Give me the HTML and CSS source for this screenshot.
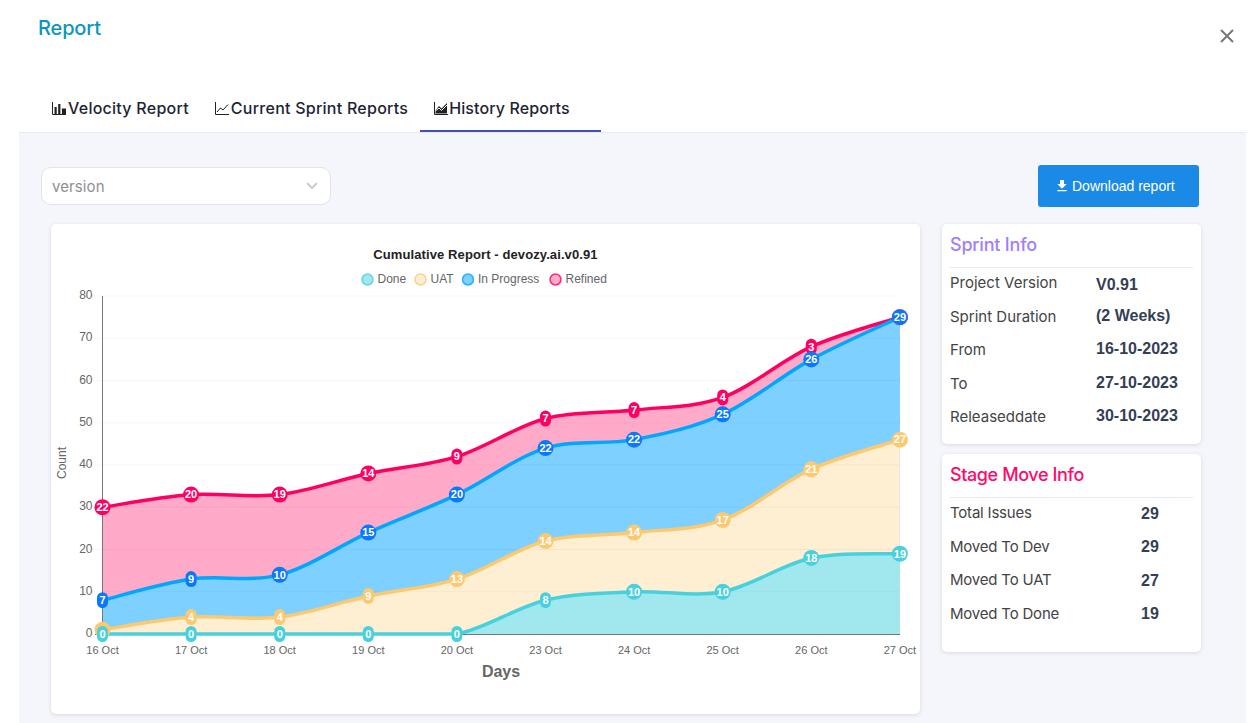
FILE: index.html
```html
<!DOCTYPE html>
<html lang="en">
<head>
    <meta charset="UTF-8">
    <title>Report</title>
    <link rel="stylesheet" href="styles.css">
</head>
<body>
    <div class="head">
        <h1 class="head-title">Report</h1>
        <button class="close" aria-label="Close">
            <svg width="14" height="14" viewBox="0 0 14 14"><path d="M1 1l12 12M13 1L1 13"/></svg>
        </button>
    </div>

    <div class="tabs">
        <a class="tab">
            <svg class="tab-icon" viewBox="0 0 14 14"><path class="ink" d="M.5 1v12.500H14" /><path class="fill" d="M2.500 6h2.200v7H2.500zM6.200 3h2.200v10H6.200zM9.900 7.500H14V13H9.900z"/></svg>
            Velocity Report
        </a>
        <a class="tab">
            <svg class="tab-icon" viewBox="0 0 14 14"><path class="ink" d="M.5 1v12.500H14M2 11l3.500-4 2.500 2 5-5.500"/></svg>
            Current Sprint Reports
        </a>
        <a class="tab tab-active">
            <svg class="tab-icon" viewBox="0 0 14 14"><path class="ink" d="M.5 1v12.500H14"/><path class="fill" d="M1.500 12.500V9.500L5 5l2.500 2.500L13 2v10.500z"/><path class="cut" d="M1.500 10l3.500-3 2.500 2.500L13 4"/></svg>
            History Reports
        </a>
    </div>

    <div class="panel">
        <div class="toolbar">
            <div class="select">
                <span>version</span>
                <svg width="12" height="8" viewBox="0 0 12 8"><path d="M1 1l5 5 5-5"/></svg>
            </div>
            <button class="download">
                <svg width="16" height="16" viewBox="0 0 24 24"><path d="M19 9h-4V3H9v6H5l7 7 7-7zM5 18v2h14v-2H5z"/></svg>
                Download report
            </button>
        </div>

        <div class="content">
            <div class="card chart-card" id="chart"></div>

            <div class="side">
                <div class="card info info-sprint">
                    <h2 class="info-title">Sprint Info</h2>
                    <div class="info-row"><span>Project Version</span><b class="info-low">V0.91</b></div>
                    <div class="info-row"><span>Sprint Duration</span><b>(2 Weeks)</b></div>
                    <div class="info-row"><span>From</span><b>16-10-2023</b></div>
                    <div class="info-row"><span>To</span><b>27-10-2023</b></div>
                    <div class="info-row"><span>Releaseddate</span><b>30-10-2023</b></div>
                </div>
                <div class="card info info-stage">
                    <h2 class="info-title">Stage Move Info</h2>
                    <div class="info-row"><span>Total Issues</span><b>29</b></div>
                    <div class="info-row"><span>Moved To Dev</span><b>29</b></div>
                    <div class="info-row"><span>Moved To UAT</span><b>27</b></div>
                    <div class="info-row"><span>Moved To Done</span><b>19</b></div>
                </div>
            </div>
        </div>
    </div>

    <script src="chart.js"></script>
</body>
</html>
```

FILE: styles.css
```css
* {
    box-sizing: border-box;
}

html, body {
    height: 100%;
}

body {
    margin: 0;
    background-color: #fff;
    font-family: Inter, "Noto Sans", sans-serif;
    color: #444;
    overflow: hidden;
    display: flex;
    flex-direction: column;
}

.head {
    height: 92px;
    padding: 16px 26px 0 38px;
    display: flex;
    justify-content: space-between;
    align-items: flex-start;
}

.head-title {
    margin: 0;
    font-size: 20px;
    line-height: 24px;
    font-weight: 500;
    letter-spacing: -0.15px;
    color: #0b95bd;
}

.close {
    margin-top: 13px;
    padding: 0;
    border: 0;
    background: none;
    line-height: 0;
}

.close path {
    stroke: #777;
    stroke-width: 2;
    fill: none;
}

.tabs {
    height: 40px;
    padding-left: 38px;
    display: flex;
}

.tab {
    height: 40px;
    padding: 0 12px 6px 14px;
    display: flex;
    align-items: center;
    gap: 2px;
    border-bottom: 2px solid transparent;
    font-size: 16px;
    font-weight: 500;
    letter-spacing: 0.25px;
    color: #1d2433;
}

.tab-active {
    padding-right: 31px;
    gap: 1px;
    border-bottom-color: #3f51b5;
    letter-spacing: 0.1px;
}

.tab-icon {
    width: 14px;
    height: 14px;
}

.tab-icon .ink {
    fill: none;
    stroke: #222;
    stroke-width: 1;
}

.tab-icon .fill {
    fill: #222;
}

.tab-icon .cut {
    fill: none;
    stroke: #fff;
    stroke-width: 1;
}

.panel {
    flex: 1;
    margin: 0 14px 0 19px;
    padding: 32px 45px 0 22px;
    background-color: #f4f6fb;
    border-top: 1px solid #e7e9f1;
}

.toolbar {
    height: 42px;
    padding-right: 2px;
    display: flex;
    justify-content: space-between;
    align-items: center;
}

.select {
    width: 290px;
    height: 38px;
    padding: 0 12px 0 10px;
    display: flex;
    justify-content: space-between;
    align-items: center;
    background-color: #fff;
    border: 1px solid #e2e4ea;
    border-radius: 10px;
    font-size: 15px;
    letter-spacing: 0.1px;
    color: #8f8f8f;
}

.select path {
    fill: none;
    stroke: #ccc;
    stroke-width: 2;
}

.download {
    width: 161px;
    height: 42px;
    padding: 0 0 0 16px;
    display: flex;
    align-items: center;
    gap: 2px;
    background-color: #1a8ae6;
    border: 0;
    border-radius: 3px;
    font-family: "Liberation Sans", Arial, sans-serif;
    font-size: 14px;
    color: #fff;
}

.download path {
    fill: #fff;
}

.content {
    margin-top: 17px;
    padding-left: 10px;
    display: flex;
    align-items: flex-start;
    gap: 22px;
}

.card {
    background-color: #fff;
    border-radius: 5px;
    box-shadow: 0 1px 4px rgba(0, 0, 0, 0.12);
}

.chart-card {
    width: 869px;
    height: 490px;
}

.chart-card svg {
    display: block;
}

.side {
    width: 259px;
    display: flex;
    flex-direction: column;
    gap: 10px;
}

.info {
    padding: 8px 8px 0;
}

.info-sprint {
    height: 220px;
}

.info-stage {
    height: 198px;
}

.info-title {
    margin: 0 0 -2px;
    height: 36px;
    border-bottom: 1px solid #e8e9ee;
    font-size: 18px;
    line-height: 26px;
    font-weight: 500;
    letter-spacing: -0.2px;
}

.info-sprint .info-title {
    color: #9f7fff;
}

.info-stage .info-title {
    letter-spacing: -0.4px;
    color: #ff0a6c;
}

.info-row {
    height: 33.500px;
    display: flex;
    align-items: center;
    font-size: 15px;
}

.info-stage .info-row {
    letter-spacing: -0.2px;
}

.info-row span {
    width: 146px;
}

.info-stage .info-row span {
    width: 191px;
}

.info-row b {
    margin-bottom: 1px;
    font-family: "Liberation Sans", Arial, sans-serif;
    font-size: 16px;
    letter-spacing: 0;
    color: #343f55;
}

.info-row .info-low {
    margin: 5px 0 0;
}

.info-stage .info-row b {
    margin: 2px 0 0;
}

/* chart */
.chart-title {
    font-family: "Liberation Sans", Arial, sans-serif;
    font-size: 13px;
    font-weight: 700;
    letter-spacing: 0.1px;
    fill: #222;
}

.chart-text {
    font-family: "Liberation Sans", Arial, sans-serif;
    font-size: 12px;
    fill: #666;
}

.chart-day {
    font-size: 11px;
}

.chart-count {
    font-size: 12px;
}

.chart-axis-title {
    font-size: 16px;
    font-weight: 700;
}

.chart-label {
    font-family: "Liberation Sans", Arial, sans-serif;
    font-size: 11px;
    font-weight: 700;
    fill: #fff;
}
```

FILE: chart.js
```js
// cumulative chart, drawn with the page's own coordinates in the viewBox
const days = ['16 Oct', '17 Oct', '18 Oct', '19 Oct', '20 Oct', '23 Oct', '24 Oct', '25 Oct', '26 Oct', '27 Oct'];

// back to front: the last one is painted on top. null = label hidden under another marker
const series = [
    {
        name: 'Refined', line: '#ff0061', dot: '#ff0061', area: '#ffaac9',
        values: [30, 33, 33, 38, 42, 51, 53, 56, 68, 75],
        labels: [22, 20, 19, 14, 9, 7, 7, 4, 3, null]
    },
    {
        name: 'In Progress', line: '#00a6ff', dot: '#0a78fa', area: '#7dd0ff',
        values: [8, 13, 14, 24, 33, 44, 46, 52, 65, 75],
        labels: [7, 9, 10, 15, 20, 22, 22, 25, 26, 29]
    },
    {
        name: 'UAT', line: '#fdc870', dot: '#fdc870', area: '#feeed2',
        values: [1, 4, 4, 9, 13, 22, 24, 27, 39, 46],
        labels: [null, 4, 4, 9, 13, 14, 14, 17, 21, 27]
    },
    {
        name: 'Done', line: '#48d0de', dot: '#48d0de', area: '#a0e8ee',
        values: [0, 0, 0, 0, 0, 8, 10, 10, 18, 19],
        labels: [0, 0, 0, 0, 0, 8, 10, 10, 18, 19]
    }
];

const left = 102.5;
const stepX = 88.6;
const bottom = 634;
const unitY = 4.225;

const xOf = i => left + i * stepX;
const yOf = v => bottom - v * unitY;

function curve(values) {
    const pts = values.map((v, i) => [xOf(i), yOf(v)]);
    let d = `M${pts[0][0]} ${pts[0][1]}`;
    for (let i = 0; i < pts.length - 1; i++) {
        const p0 = pts[i - 1] || pts[i];
        const p1 = pts[i];
        const p2 = pts[i + 1];
        const p3 = pts[i + 2] || p2;
        const c1x = p1[0] + (p2[0] - p0[0]) / 6;
        const c1y = Math.min(p1[1] + (p2[1] - p0[1]) / 6, bottom);
        const c2x = p2[0] - (p3[0] - p1[0]) / 6;
        const c2y = Math.min(p2[1] - (p3[1] - p1[1]) / 6, bottom);
        d += `C${c1x.toFixed(1)} ${c1y.toFixed(1)} ${c2x.toFixed(1)} ${c2y.toFixed(1)} ${p2[0]} ${p2[1].toFixed(1)}`;
    }
    return d;
}

let svg = '<svg width="869" height="490" viewBox="51 224 869 490">';

svg += '<text class="chart-title" x="485.500" y="259" text-anchor="middle">Cumulative Report - devozy.ai.v0.91</text>';

// legend
const legend = [
    { x: 367.500, s: series[3], text: 'Done' },
    { x: 420.500, s: series[2], text: 'UAT' },
    { x: 468, s: series[1], text: 'In Progress' },
    { x: 555.500, s: series[0], text: 'Refined' }
];
legend.forEach(l => {
    svg += `<circle cx="${l.x}" cy="279.500" r="5.500" fill="${l.s.area}" stroke="${l.s.line}" stroke-width="1.500" stroke-opacity="0.8"/>`;
    svg += `<text class="chart-text" x="${l.x + 10}" y="283">${l.text}</text>`;
});

// areas first, then grid on top of them, lines and labels after
series.forEach(s => {
    const d = curve(s.values);
    svg += `<path d="${d}L${xOf(9)} ${bottom}L${left} ${bottom}Z" fill="${s.area}"/>`;
});

for (let v = 0; v <= 80; v += 10) {
    const y = yOf(v);
    if (v > 0) {
        svg += `<line x1="93" x2="900" y1="${y}" y2="${y}" stroke="#000" stroke-opacity="0.035"/>`;
    }
    svg += `<text class="chart-text" x="92.500" y="${y + 3}" text-anchor="end">${v}</text>`;
}

// axes
svg += `<path d="M102.500 296V641M95 634.500H900" stroke="#777" fill="none"/>`;

series.forEach(s => {
    svg += `<path d="${curve(s.values)}" fill="none" stroke="${s.line}" stroke-width="3.500"/>`;
});

series.forEach(s => {
    s.values.forEach((v, i) => {
        const label = s.labels[i];
        const x = xOf(i);
        const y = yOf(v);
        const w = String(label).length === 1 ? 11 : 16;
        svg += `<rect x="${x - w / 2}" y="${y - 8}" width="${w}" height="16" rx="${w / 2}" fill="${s.dot}"/>`;
        if (label !== null) {
            svg += `<text class="chart-label" x="${x}" y="${y + 3.800}" text-anchor="middle">${label}</text>`;
        }
    });
});

// x axis labels
days.forEach((day, i) => {
    svg += `<text class="chart-text chart-day" x="${xOf(i)}" y="654" text-anchor="middle">${day}</text>`;
});

svg += '<text class="chart-text chart-axis-title" x="501" y="677" text-anchor="middle">Days</text>';
svg += '<text class="chart-text chart-count" transform="translate(66 463) rotate(-90)" text-anchor="middle">Count</text>';
svg += '</svg>';

document.getElementById('chart').innerHTML = svg;
```
